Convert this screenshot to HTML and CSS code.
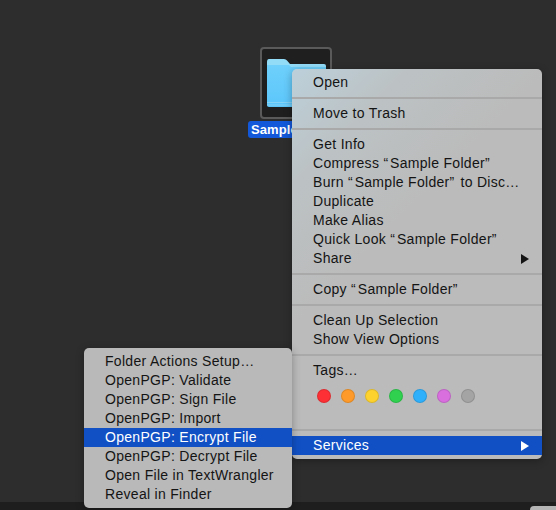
FILE: index.html
```html
<!DOCTYPE html>
<html lang="en">
<head>
<meta charset="utf-8">
<title>Finder context menu</title>
<link rel="stylesheet" href="styles.css">
</head>
<body>
<div class="screen">
  <main class="desktop">
    <div class="file">
      <div class="thumb">
        <svg class="folder" viewBox="0 0 60 48" width="60" height="48" aria-hidden="true">
          <defs>
            <linearGradient id="front" x1="0" y1="0" x2="0" y2="1">
              <stop offset="0" stop-color="#6ed0fb"/>
              <stop offset="1" stop-color="#5cc6fb"/>
            </linearGradient>
          </defs>
          <path d="M3 0H18Q20 0 21 1.500L24 5H58Q60 5 60 7V12H1V3Q1 0 3 0Z" fill="#93dcf8"/>
          <path d="M1 6H23L25 8H60V46Q60 48 58 48H3Q1 48 1 46Z" fill="url(#front)"/>
          <path d="M1 43.500H60M1 46H60" stroke="#86d3f5" stroke-width="1"/>
        </svg>
      </div>
      <span class="file-label">Sample Folder</span>
    </div>

    <nav class="menu menu-main">
      <div class="item">Open</div>
      <div class="sep"></div>
      <div class="item">Move to Trash</div>
      <div class="sep"></div>
      <div class="item">Get Info</div>
      <div class="item">Compress <span class="q">“</span>Sample Folder<span class="q">”</span></div>
      <div class="item">Burn <span class="q">“</span>Sample Folder<span class="q">”</span> to Disc…</div>
      <div class="item">Duplicate</div>
      <div class="item">Make Alias</div>
      <div class="item">Quick Look <span class="q">“</span>Sample Folder<span class="q">”</span></div>
      <div class="item has-sub">Share<span class="arrow"></span></div>
      <div class="sep"></div>
      <div class="item">Copy <span class="q">“</span>Sample Folder<span class="q">”</span></div>
      <div class="sep"></div>
      <div class="item">Clean Up Selection</div>
      <div class="item">Show View Options</div>
      <div class="sep"></div>
      <div class="item">Tags…</div>
      <div class="tags">
        <span class="tag tag-red"></span>
        <span class="tag tag-orange"></span>
        <span class="tag tag-yellow"></span>
        <span class="tag tag-green"></span>
        <span class="tag tag-blue"></span>
        <span class="tag tag-purple"></span>
        <span class="tag tag-gray"></span>
      </div>
      <div class="sep"></div>
      <div class="item has-sub active">Services<span class="arrow"></span></div>
    </nav>

    <nav class="menu menu-sub">
      <div class="item">Folder Actions Setup…</div>
      <div class="item">OpenPGP: Validate</div>
      <div class="item">OpenPGP: Sign File</div>
      <div class="item">OpenPGP: Import</div>
      <div class="item active">OpenPGP: Encrypt File</div>
      <div class="item">OpenPGP: Decrypt File</div>
      <div class="item">Open File in TextWrangler</div>
      <div class="item">Reveal in Finder</div>
    </nav>
  </main>
  <footer class="strip"><span class="strip-tab"></span></footer>
</div>
</body>
</html>
```
FILE: styles.css
```css
* { box-sizing: border-box; }
html, body { margin: 0; height: 100%; }
body {
  background: #2d2d2d;
  font-family: "Liberation Sans", Arial, sans-serif;
  overflow: hidden;
}
.screen {
  width: 556px;
  height: 510px;
  display: flex;
  flex-direction: column;
}
.desktop {
  position: relative;
  flex: 1;
  background: #2d2d2d;
}
.strip {
  height: 8px;
  background: #1e1e1e;
  display: flex;
  justify-content: flex-end;
  align-items: flex-end;
}
.strip-tab {
  width: 26px;
  height: 4px;
  background: #b4b4b4;
  border-radius: 5px 0 0 0;
}
.file {
  position: absolute;
  left: 248px;
  top: 47px;
  width: 96px;
  display: flex;
  flex-direction: column;
  align-items: center;
}
.thumb {
  width: 72px;
  height: 72px;
  border: 2px solid #5a5a5a;
  border-radius: 4px;
  background: #1f1f1f;
  padding: 10px 0 0 4px;
}
.folder { display: block; }
.file-label {
  margin-top: 2px;
  width: 96px;
  height: 17px;
  line-height: 17px;
  padding-left: 3px;
  background: #1258d8;
  border-radius: 3px;
  color: #fff;
  font-size: 13px;
  font-weight: bold;
  letter-spacing: 0.1px;
  white-space: nowrap;
}
.menu {
  position: absolute;
  padding: 4px 0;
  border-radius: 5px;
  color: #141414;
  font-size: 14px;
  letter-spacing: 0.3px;
  box-shadow: 0 2px 8px rgba(0, 0, 0, 0.3);
}
.menu-main {
  left: 292px;
  top: 69px;
  width: 250px;
  background: linear-gradient(135deg, #bcd0da 0, #bcc2c4 18%, #bbbbbb 40%);
}
.menu-sub {
  left: 84px;
  top: 348px;
  width: 208px;
  background: #b9b9b9;
}
.item {
  height: 19px;
  line-height: 19px;
  padding-left: 21px;
  white-space: nowrap;
  position: relative;
}
.item.active {
  background: #1150c4;
  color: #fff;
}
.q { letter-spacing: 2px; }
.sep {
  height: 12px;
  display: flex;
  align-items: center;
}
.sep::before {
  content: "";
  display: block;
  width: 100%;
  height: 2px;
  background: #a9a9a9;
}
.arrow {
  position: absolute;
  right: 13px;
  top: 5px;
  width: 0;
  height: 0;
  border-left: 8px solid #141414;
  border-top: 5px solid transparent;
  border-bottom: 5px solid transparent;
}
.active .arrow { border-left-color: #fff; }
.tags {
  height: 44px;
  padding: 9px 0 0 25px;
  display: flex;
  gap: 10px;
}
.tag {
  width: 14px;
  height: 14px;
  border-radius: 50%;
  border: 1px solid rgba(0, 0, 0, 0.12);
}
.tag-red { background: #fc3035; }
.tag-orange { background: #fd9a2a; }
.tag-yellow { background: #fdd22e; }
.tag-green { background: #2fd14f; }
.tag-blue { background: #2fb0fb; }
.tag-purple { background: #d96fdf; }
.tag-gray { background: #a4a4a4; }
```
